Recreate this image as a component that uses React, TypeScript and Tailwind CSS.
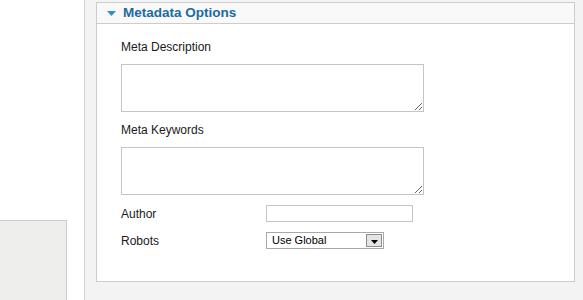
// Metadata options panel (admin form)
export default function App() {
  return (
    <div className="flex h-[300px] w-[583px] overflow-hidden bg-white font-['Liberation_Sans',Arial,sans-serif]">
      {/* left column */}
      <div className="flex w-[84px] shrink-0 flex-col justify-end">
        <div className="h-[80px] w-[67px] border-t border-r border-[#cccccc] bg-[#eeeeec]" />
      </div>

      {/* main area */}
      <div className="flex-1 border-l border-[#d6d6d6] bg-[#f3f3f3] pt-[2px] pl-[11px]">
        <div className="h-[280px] w-[479px] border border-[#cccccc] bg-white">
          {/* header */}
          <div className="flex h-[21px] items-center gap-[7px] border-b border-[#cccccc] bg-[#f9f9f9] pl-[10px]">
            <svg width="9" height="5" viewBox="0 0 9 5" className="mt-[1px]">
              <polygon points="0,0 9,0 4.5,5" fill="#2e8fd0" />
            </svg>
            <span className="text-[13.5px] leading-[16px] font-bold text-[#1c6aa3]">Metadata Options</span>
          </div>

          {/* body */}
          <div className="flex flex-col pl-[24px] text-[12px] leading-[14px] text-[#1a1a1a]">
            <label className="mt-[16px]">Meta Description</label>
            <textarea className="mt-[10px] h-[48px] w-[303px] border border-[#c4c4c4] bg-white outline-none" />
            <label className="mt-[11px]">Meta Keywords</label>
            <textarea className="mt-[10px] h-[48px] w-[303px] border border-[#c4c4c4] bg-white outline-none" />

            <div className="mt-[10px] flex h-[17px] items-center">
              <span className="w-[145px]">Author</span>
              <input className="h-[17px] w-[147px] border border-[#c4c4c4] bg-white outline-none" />
            </div>

            <div className="mt-[10px] flex h-[17px] items-center">
              <span className="w-[145px]">Robots</span>
              <div className="flex h-[17px] w-[118px] items-center justify-between border border-[#a8a8a8] bg-white pl-[5px] pr-[1px]">
                <span className="text-[11px] leading-[13px] text-black">Use Global</span>
                <div className="flex h-[13px] w-[16px] items-center justify-center border border-[#8e8e8e] bg-[#e4e4e4]">
                  <svg width="7" height="4" viewBox="0 0 7 4" className="mt-[2px]">
                    <polygon points="0,0 7,0 3.5,4" fill="#000" />
                  </svg>
                </div>
              </div>
            </div>
          </div>
        </div>
      </div>
    </div>
  );
}
